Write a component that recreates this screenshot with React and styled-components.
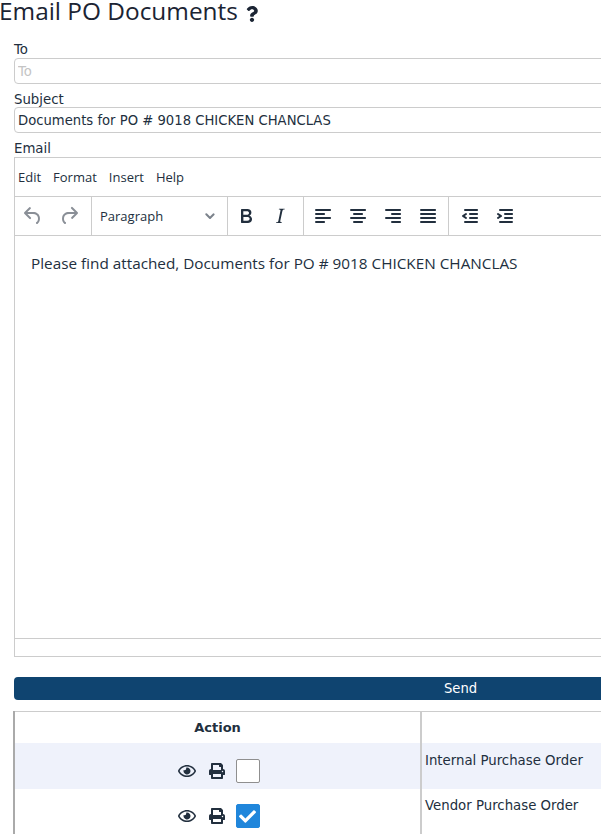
import styled, { createGlobalStyle } from "styled-components";
import { FaCheck, FaPrint, FaQuestion, FaRegEye } from "react-icons/fa";

const GlobalStyle = createGlobalStyle`
  html, body {
    margin: 0;
    padding: 0;
    width: 601px;
    height: 834px;
    overflow: hidden;
    background: #fff;
  }
`;

const UNDO =
  "M6.4 8H12c3.7 0 6.2 2 6.8 5.1.6 2.7-.4 5.6-2.3 6.8a1 1 0 0 1-1-1.8c1.1-.6 1.8-2.7 1.4-4.6-.5-2.1-2.1-3.5-4.9-3.5H6.4l3.3 3.3a1 1 0 1 1-1.4 1.4l-5-5a1 1 0 0 1 0-1.4l5-5a1 1 0 0 1 1.4 1.4L6.4 8z";
const REDO =
  "M17.6 10H12c-2.8 0-4.4 1.4-4.9 3.5-.4 2 .3 4 1.4 4.6a1 1 0 1 1-1 1.8c-2-1.2-2.9-4.1-2.3-6.8.6-3 3-5.1 6.8-5.1h5.6l-3.3-3.3a1 1 0 1 1 1.4-1.4l5 5a1 1 0 0 1 0 1.4l-5 5a1 1 0 0 1-1.4-1.4l3.3-3.3z";
const BOLD =
  "M7.8 19c-.3 0-.5 0-.6-.2l-.2-.5V5.7c0-.2 0-.4.2-.5l.6-.2h5c1.5 0 2.7.3 3.5 1 .7.6 1.1 1.4 1.1 2.5a3 3 0 0 1-.6 1.9c-.4.6-1 1-1.6 1.2.4.1.9.3 1.3.6s.8.7 1 1.2c.4.4.5 1 .5 1.6 0 1.3-.4 2.3-1.3 3-.8.7-2.1 1-3.8 1H7.8zm5-8.3c.6 0 1.2-.1 1.6-.5.4-.3.6-.7.6-1.3 0-1.1-.8-1.7-2.3-1.7H9.3v3.5h3.4zm.5 6c.7 0 1.3-.1 1.7-.4.4-.4.6-.9.6-1.5s-.2-1-.7-1.4c-.4-.3-1-.4-2-.4H9.4v3.8h4z";
const ITALIC =
  "M16.7 4.7l-.1.9h-.3c-.6 0-1 0-1.4.3-.3.3-.4.6-.5 1.1l-2.1 9.8v.6c0 .5.4.8 1.4.8h.2l-.2.8H8l.2-.8h.2c1.1 0 1.8-.5 2-1.5l2-9.8.1-.5c0-.6-.4-.8-1.4-.8h-.3l.2-.9h5.8z";
const ALIGN_LEFT =
  "M5 5h14c.6 0 1 .4 1 1s-.4 1-1 1H5a1 1 0 1 1 0-2zm0 4h8c.6 0 1 .4 1 1s-.4 1-1 1H5a1 1 0 1 1 0-2zm0 8h8c.6 0 1 .4 1 1s-.4 1-1 1H5a1 1 0 0 1 0-2zm0-4h14c.6 0 1 .4 1 1s-.4 1-1 1H5a1 1 0 0 1 0-2z";
const ALIGN_CENTER =
  "M5 5h14c.6 0 1 .4 1 1s-.4 1-1 1H5a1 1 0 1 1 0-2zm3 4h8c.6 0 1 .4 1 1s-.4 1-1 1H8a1 1 0 1 1 0-2zm0 8h8c.6 0 1 .4 1 1s-.4 1-1 1H8a1 1 0 0 1 0-2zm-3-4h14c.6 0 1 .4 1 1s-.4 1-1 1H5a1 1 0 0 1 0-2z";
const ALIGN_RIGHT =
  "M5 5h14c.6 0 1 .4 1 1s-.4 1-1 1H5a1 1 0 1 1 0-2zm6 4h8c.6 0 1 .4 1 1s-.4 1-1 1h-8a1 1 0 0 1 0-2zm0 8h8c.6 0 1 .4 1 1s-.4 1-1 1h-8a1 1 0 0 1 0-2zm-6-4h14c.6 0 1 .4 1 1s-.4 1-1 1H5a1 1 0 0 1 0-2z";
const JUSTIFY =
  "M5 5h14c.6 0 1 .4 1 1s-.4 1-1 1H5a1 1 0 1 1 0-2zm0 4h14c.6 0 1 .4 1 1s-.4 1-1 1H5a1 1 0 1 1 0-2zm0 4h14c.6 0 1 .4 1 1s-.4 1-1 1H5a1 1 0 0 1 0-2zm0 4h14c.6 0 1 .4 1 1s-.4 1-1 1H5a1 1 0 0 1 0-2z";
const OUTDENT =
  "M7 5h12c.6 0 1 .4 1 1s-.4 1-1 1H7a1 1 0 1 1 0-2zm5 4h7c.6 0 1 .4 1 1s-.4 1-1 1h-7a1 1 0 0 1 0-2zm0 4h7c.6 0 1 .4 1 1s-.4 1-1 1h-7a1 1 0 0 1 0-2zm-5 4h12a1 1 0 0 1 0 2H7a1 1 0 0 1 0-2zm1.6-3.8a1 1 0 0 1-1.2 1.6l-3-2a1 1 0 0 1 0-1.6l3-2a1 1 0 0 1 1.2 1.6L6.8 12l1.8 1.2z";
const INDENT =
  "M7 5h12c.6 0 1 .4 1 1s-.4 1-1 1H7a1 1 0 1 1 0-2zm5 4h7c.6 0 1 .4 1 1s-.4 1-1 1h-7a1 1 0 0 1 0-2zm0 4h7c.6 0 1 .4 1 1s-.4 1-1 1h-7a1 1 0 0 1 0-2zm-5 4h12a1 1 0 0 1 0 2H7a1 1 0 0 1 0-2zm-2.6-3.8L6.2 12l-1.8-1.2a1 1 0 0 1 1.2-1.6l3 2a1 1 0 0 1 0 1.6l-3 2a1 1 0 1 1-1.2-1.6z";
const CHEVRON =
  "M.6.6a1 1 0 0 1 1.4 0l3 3 3-3a1 1 0 0 1 1.4 1.4L5.7 5.7a1 1 0 0 1-1.4 0L.6 2A1 1 0 0 1 .6.6z";

const documents = [
  { name: "Internal Purchase Order", checked: false },
  { name: "Vendor Purchase Order", checked: true },
];

const ToolIcon = ({ d, muted }) => (
  <ToolButton>
    <svg width="24" height="24" viewBox="0 0 24 24" fill={muted ? "#8a8f97" : "#222f3e"}>
      <path d={d} />
    </svg>
  </ToolButton>
);

export default function App() {
  return (
    <Page>
      <GlobalStyle />
      <Title>
        Email PO Documents
        <HelpMark>
          <FaQuestion />
        </HelpMark>
      </Title>
      <Form>
        <ToLabel>To</ToLabel>
        <TextInput placeholder="To" readOnly />
        <Label>Subject</Label>
        <TextInput value="Documents for PO # 9018 CHICKEN CHANCLAS" readOnly />
        <EmailLabel>Email</EmailLabel>
        <Editor>
          <MenuBar>
            <MenuItem>Edit</MenuItem>
            <MenuItem>Format</MenuItem>
            <MenuItem>Insert</MenuItem>
            <MenuItem>Help</MenuItem>
          </MenuBar>
          <ToolBar>
            <HistoryGroup>
              <ToolIcon d={UNDO} muted />
              <ToolIcon d={REDO} muted />
            </HistoryGroup>
            <StyleSelect>
              Paragraph
              <svg width="10" height="6" viewBox="0 0 10 6" fill="#7b828b">
                <path d={CHEVRON} />
              </svg>
            </StyleSelect>
            <FormatGroup>
              <ToolIcon d={BOLD} />
              <ToolIcon d={ITALIC} />
            </FormatGroup>
            <ToolGroup>
              <ToolIcon d={ALIGN_LEFT} />
              <ToolIcon d={ALIGN_CENTER} />
              <ToolIcon d={ALIGN_RIGHT} />
              <ToolIcon d={JUSTIFY} />
            </ToolGroup>
            <ToolGroup>
              <ToolIcon d={OUTDENT} />
              <ToolIcon d={INDENT} />
            </ToolGroup>
          </ToolBar>
          <EditorBody>Please find attached, Documents for PO # 9018 CHICKEN CHANCLAS</EditorBody>
          <StatusBar />
        </Editor>
        <SendButton type="button">Send</SendButton>
      </Form>
      <DocTable>
        <colgroup>
          <col style={{ width: 407 }} />
          <col style={{ width: 500 }} />
        </colgroup>
        <thead>
          <tr>
            <HeadCell>Action</HeadCell>
            <HeadCell />
          </tr>
        </thead>
        <tbody>
          {documents.map((doc, i) => (
            <DocRow key={doc.name} $shaded={i % 2 === 0}>
              <ActionCell>
                <Actions>
                  <FaRegEye size={18} />
                  <PrintIcon size={16} />
                  <CheckBox $checked={doc.checked}>{doc.checked && <FaCheck size={17} />}</CheckBox>
                </Actions>
              </ActionCell>
              <NameCell>{doc.name}</NameCell>
            </DocRow>
          ))}
        </tbody>
      </DocTable>
    </Page>
  );
}

const Page = styled.div`
  width: 920px;
  color: #222f3e;
  font-family: Verdana, "DejaVu Sans", sans-serif;
`;

const Title = styled.h1`
  display: flex;
  align-items: center;
  margin: 0 0 0 -1px;
  height: 21px;
  padding-bottom: 1px;
  font-family: "Open Sans", sans-serif;
  font-size: 24.4px;
  font-weight: 400;
  line-height: 21px;
  color: #1b2433;
`;

const HelpMark = styled.span`
  display: flex;
  margin: 6px 0 0 6px;
  font-size: 16px;
  color: #1b2433;
`;

const Form = styled.div`
  display: flex;
  flex-direction: column;
  width: 893px;
  margin-left: 14px;
  padding-top: 19px;
`;

const Label = styled.label`
  height: 16px;
  font-size: 13.3px;
  line-height: 17px;
  color: #222f3e;
`;

const ToLabel = styled(Label)`
  height: 17px;
`;

const EmailLabel = styled(Label)`
  height: 17px;
`;

const TextInput = styled.input`
  box-sizing: border-box;
  height: 26px;
  margin-bottom: 7px;
  padding: 0 3px;
  border: 1px solid #ccc;
  border-radius: 4px;
  outline: none;
  font-family: inherit;
  font-size: 13.2px;
  color: #222f3e;

  &::placeholder {
    color: #c4c4c4;
  }
`;

const Editor = styled.div`
  display: flex;
  flex-direction: column;
  height: 500px;
  border: 1px solid #ccc;
  box-sizing: border-box;
  font-family: "Open Sans", sans-serif;
`;

const MenuBar = styled.div`
  display: flex;
  align-items: center;
  gap: 12px;
  height: 38px;
  padding-left: 3px;
  border-bottom: 1px solid #ccc;
`;

const MenuItem = styled.span`
  font-size: 13px;
  color: #222f3e;
`;

const ToolBar = styled.div`
  display: flex;
  height: 38px;
  border-bottom: 1px solid #ccc;
`;

const ToolGroup = styled.div`
  display: flex;
  gap: 1px;
  padding: 0 3px 0 2px;
  border-right: 1px solid #ccc;

  &:last-child {
    border-right: none;
    padding-left: 4px;
  }
`;

const HistoryGroup = styled(ToolGroup)`
  gap: 2px;
  padding: 0 5px 0 1px;
`;

const FormatGroup = styled(ToolGroup)`
  gap: 0;
  padding: 0 6px 0 1px;
`;

const ToolButton = styled.span`
  display: flex;
  align-items: center;
  justify-content: center;
  width: 34px;
`;

const StyleSelect = styled.div`
  display: flex;
  align-items: center;
  justify-content: space-between;
  box-sizing: border-box;
  width: 136px;
  padding: 0 12px 0 8px;
  border-right: 1px solid #ccc;
  font-size: 13px;
  color: #222f3e;
`;

const EditorBody = styled.div`
  flex: 1;
  padding: 16px;
  border-bottom: 1px solid #ccc;
  font-size: 15.3px;
  line-height: 22px;
  color: #222f3e;
`;

const StatusBar = styled.div`
  height: 17px;
`;

const SendButton = styled.button`
  height: 23px;
  margin-top: 20px;
  padding: 0;
  border: none;
  border-radius: 4px;
  background: #0f4470;
  color: #fff;
  font-family: Verdana, "DejaVu Sans", sans-serif;
  font-size: 13.2px;
`;

const DocTable = styled.table`
  width: 907px;
  margin: 11px 0 0 13px;
  border-collapse: collapse;
  table-layout: fixed;
`;

const HeadCell = styled.th`
  height: 31px;
  padding: 0;
  border-top: 1px solid #ccc;
  font-size: 13px;
  font-weight: 700;
  text-align: center;
  color: #222f3e;

  &:first-child {
    border-left: 2px solid #aaa;
  }

  &:last-child {
    border-left: 2px solid #ccc;
  }
`;

const DocRow = styled.tr`
  height: ${(p) => (p.$shaded ? "46px" : "45px")};
  background: ${(p) => (p.$shaded ? "#eff2fb" : "#fff")};
`;

const ActionCell = styled.td`
  padding: 0;
  border-left: 2px solid #aaa;
  vertical-align: bottom;
`;

const Actions = styled.div`
  display: flex;
  align-items: center;
  justify-content: center;
  gap: 12px;
  padding: 0 0 6px 2px;
`;

const PrintIcon = styled(FaPrint)`
  margin: 0 -1px 0 1px;
`;

const CheckBox = styled.span`
  display: flex;
  align-items: center;
  justify-content: center;
  box-sizing: border-box;
  width: 24px;
  height: 24px;
  border-radius: 2px;
  border: 1px solid ${(p) => (p.$checked ? "#2086db" : "#8f8f8f")};
  background: ${(p) => (p.$checked ? "#2086db" : "#fff")};
  color: #fff;
`;

const NameCell = styled.td`
  padding: 9px 0 0 3px;
  border-left: 2px solid #ccc;
  font-size: 13.3px;
  vertical-align: top;
  color: #222f3e;

  tr:nth-child(odd) > & {
    padding-top: 10px;
  }
`;
